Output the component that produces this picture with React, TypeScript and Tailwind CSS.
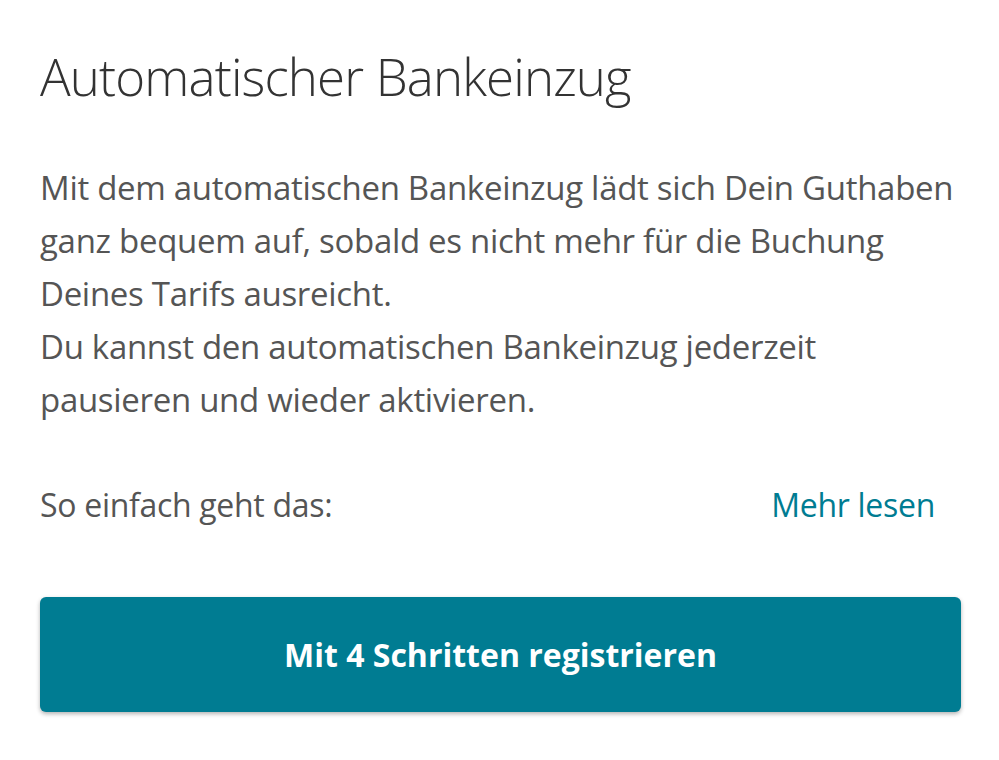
import * as React from "react";

export default function App() {
  return (
    <div className="min-h-[760px] w-[999px] bg-white px-[40px] pt-[44px]" style={{ fontFamily: '"Open Sans", sans-serif' }}>
      <h1 className="text-[51px] font-light leading-[64px] text-[#333333] tracking-[-0.85px]">
        Automatischer Bankeinzug
      </h1>
      <p className="mt-[53px] text-[33px] leading-[53px] text-[#555555] tracking-[-0.3px]">
        Mit dem automatischen Bankeinzug lädt sich Dein Guthaben
        <br />
        ganz bequem auf, sobald es nicht mehr für die Buchung
        <br />
        Deines Tarifs ausreicht.
        <br />
        Du kannst den automatischen Bankeinzug jederzeit
        <br />
        pausieren und wieder aktivieren.
      </p>
      <div className="mt-[55px] flex items-center justify-between pr-[24px]">
        <span className="text-[32px] text-[#555555] tracking-[-0.3px]">So einfach geht das:</span>
        <span className="text-[32px] text-[#007c92] tracking-[-0.3px]">Mehr lesen</span>
      </div>
      <button className="mt-[68px] flex h-[115px] w-[921px] items-center justify-center rounded-[6px] bg-[#007c92] text-[32px] font-bold text-white shadow-[0_2px_4px_rgba(0,0,0,0.3)]">
        Mit 4 Schritten registrieren
      </button>
    </div>
  );
}
